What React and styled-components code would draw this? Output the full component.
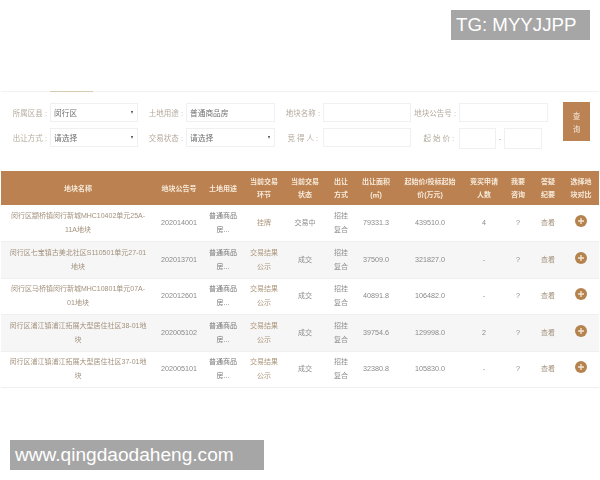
import React from 'react';
import styled, { createGlobalStyle } from 'styled-components';

const Global = createGlobalStyle`
  html, body {
    margin: 0;
    padding: 0;
    background: #fff;
  }
  body {
    width: 600px;
    height: 480px;
    overflow: hidden;
    font-family: "Liberation Sans", "Noto Sans CJK SC", sans-serif;
  }
`;

const Styled = {
  Page: styled.div`
    position: relative;
    width: 600px;
    height: 480px;
    padding-top: 91px;
    box-sizing: border-box;
    overflow: hidden;
  `,
  Content: styled.div`
    filter: blur(0.35px);
  `,
  TabLine: styled.div`
    height: 1px;
    margin: 0 1px;
    background: #f1f1f1;
    &::before {
      content: '';
      display: block;
      width: 43px;
      height: 1px;
      margin-left: 49px;
      background: #d8cbb4;
    }
  `,
  Form: styled.div`
    display: grid;
    grid-template-columns: 38px 88px 48px 89px 48px 88px 48px 89px 42px;
    grid-auto-rows: 19px;
    row-gap: 6px;
    margin: 11px 0 0 12px;
    font-size: 7.7px;
    color: #666;
  `,
  Label: styled.label`
    display: flex;
    align-items: center;
    justify-content: flex-end;
    padding-right: 3px;
    white-space: nowrap;
    color: #b5aa9d;
    font-size: 7.5px;
    letter-spacing: ${(p) => (p.$spaced ? '2px' : '0')};
  `,
  Field: styled.div`
    display: flex;
    align-items: center;
    justify-content: space-between;
    padding: 0 4px 0 3px;
    box-sizing: border-box;
    border: 1px solid #eef0f2;
    background: #fff;
    font-family: "Noto Sans CJK SC", sans-serif;
    color: #707070;
  `,
  Arrow: styled.span`
    width: 0;
    height: 0;
    border-left: 1.5px solid transparent;
    border-right: 1.5px solid transparent;
    border-top: 3px solid #444;
  `,
  Range: styled.div`
    display: grid;
    grid-template-columns: 37px 8px 38px;
    width: 83px;
  `,
  Dash: styled.span`
    color: #999;
    line-height: 21px;
    text-align: center;
  `,
  Search: styled.button`
    grid-column: 9;
    grid-row: 1 / span 2;
    margin: -1px 0 0 15px;
    width: 27px;
    height: 39px;
    padding: 0 9px;
    border: 0;
    background: #bb8353;
    color: #f3e4d6;
    font-family: "Noto Sans CJK SC", sans-serif;
    font-size: 7.5px;
    line-height: 13px;
  `,
  Table: styled.table`
    width: 598px;
    margin: 24px 0 0 1px;
    table-layout: fixed;
    border-collapse: collapse;
    font-family: "Liberation Sans", "Noto Sans CJK SC", sans-serif;
    line-height: 14px;
    text-align: center;
  `,
  HeadRow: styled.tr`
    height: 34px;
    background: #bb8151;
  `,
  Head: styled.th`
    padding: 0;
    color: #f6ead9;
    font-weight: 700;
    font-size: 7px;
    line-height: 13px;
  `,
  Row: styled.tr`
    height: 36.5px;
    border-bottom: 1px solid #efefef;
    background: ${(p) => (p.$striped ? '#f6f6f6' : '#fff')};
  `,
  Cell: styled.td`
    padding: 0 ${(p) => p.$inset || 3}px;
    color: ${(p) => p.$color || '#8e8e8e'};
    font-size: 7px;
  `,
  Number: styled.td`
    padding: 0;
    color: #8a8a8a;
    font-size: 7.2px;
  `,
  Add: styled.svg`
    display: block;
    width: 12px;
    height: 12px;
    margin: -4px auto 0;
  `,
  Badge: styled.div`
    position: absolute;
    height: 30px;
    padding-left: 5px;
    box-sizing: border-box;
    background: #a6a6a6;
    color: #fff;
    line-height: 30px;
    white-space: nowrap;
  `,
};

const TopBadge = styled(Styled.Badge)`
  top: 10px;
  left: 451px;
  width: 139px;
  font-size: 18.7px;
`;

const BottomBadge = styled(Styled.Badge)`
  top: 440px;
  left: 10px;
  width: 254px;
  font-size: 19.1px;
`;

const columns = [154, 48, 40, 42, 40, 32, 38, 70, 38, 30, 30, 36];

const headers = [
  ['地块名称'],
  ['地块公告号'],
  ['土地用途'],
  ['当前交易', '环节'],
  ['当前交易', '状态'],
  ['出让', '方式'],
  ['出让面积', '(㎡)'],
  ['起始价/投标起始', '价(万元)'],
  ['竞买申请', '人数'],
  ['我要', '咨询'],
  ['答疑', '纪要'],
  ['选择地', '块对比'],
];

const rows = [
  { name: '闵行区颛桥镇闵行新城MHC10402单元25A-11A地块', no: '202014001', step: '挂牌', state: '交易中', area: '79331.3', price: '439510.0', count: '4' },
  { name: '闵行区七宝镇古美北社区S110501单元27-01地块', no: '202013701', step: '交易结果公示', state: '成交', area: '37509.0', price: '321827.0', count: '-' },
  { name: '闵行区马桥镇闵行新城MHC10801单元07A-01地块', no: '202012601', step: '交易结果公示', state: '成交', area: '40891.8', price: '106482.0', count: '-' },
  { name: '闵行区浦江镇浦江拓展大型居住社区38-01地块', no: '202005102', step: '交易结果公示', state: '成交', area: '39754.6', price: '129998.0', count: '2' },
  { name: '闵行区浦江镇浦江拓展大型居住社区37-01地块', no: '202005101', step: '交易结果公示', state: '成交', area: '32380.8', price: '105830.0', count: '-' },
];

const AddIcon = () => (
  <Styled.Add viewBox="0 0 12 12">
    <circle cx="6" cy="6" r="6" fill="#b5834e" />
    <path d="M6 3v6M3 6h6" stroke="#f4e6d6" strokeWidth="1.3" />
  </Styled.Add>
);

const App = () => (
  <Styled.Page>
    <Global />
    <Styled.Content>
      <Styled.TabLine />
      <Styled.Form>
        <Styled.Label>所属区县 :</Styled.Label>
        <Styled.Field>闵行区<Styled.Arrow /></Styled.Field>
        <Styled.Label>土地用途 :</Styled.Label>
        <Styled.Field>普通商品房</Styled.Field>
        <Styled.Label>地块名称 :</Styled.Label>
        <Styled.Field />
        <Styled.Label>地块公告号 :</Styled.Label>
        <Styled.Field />
        <Styled.Search>查询</Styled.Search>
        <Styled.Label>出让方式 :</Styled.Label>
        <Styled.Field>请选择<Styled.Arrow /></Styled.Field>
        <Styled.Label>交易状态 :</Styled.Label>
        <Styled.Field>请选择<Styled.Arrow /></Styled.Field>
        <Styled.Label $spaced>竞得人:</Styled.Label>
        <Styled.Field />
        <Styled.Label $spaced>起始价:</Styled.Label>
        <Styled.Range>
          <Styled.Field />
          <Styled.Dash>-</Styled.Dash>
          <Styled.Field />
        </Styled.Range>
      </Styled.Form>
      <Styled.Table>
        <colgroup>
          {columns.map((width, i) => <col key={i} width={width} />)}
        </colgroup>
        <thead>
          <Styled.HeadRow>
            {headers.map((lines) => (
              <Styled.Head key={lines[0] + lines[1]}>
                {lines.map((line) => <div key={line}>{line}</div>)}
              </Styled.Head>
            ))}
          </Styled.HeadRow>
        </thead>
        <tbody>
          {rows.map((row, i) => (
            <Styled.Row key={row.no} $striped={i % 2 === 1}>
              <Styled.Cell $color="#a3917d" $inset={8}>{row.name}</Styled.Cell>
              <Styled.Number>{row.no}</Styled.Number>
              <Styled.Cell $color="#777" $inset={5}>普通商品房...</Styled.Cell>
              <Styled.Cell $color="#ab967c" $inset={7}>{row.step}</Styled.Cell>
              <Styled.Cell>{row.state}</Styled.Cell>
              <Styled.Cell $inset={8}>招挂复合</Styled.Cell>
              <Styled.Number>{row.area}</Styled.Number>
              <Styled.Number>{row.price}</Styled.Number>
              <Styled.Number>{row.count}</Styled.Number>
              <Styled.Number>?</Styled.Number>
              <Styled.Cell $color="#a3917d">查看</Styled.Cell>
              <Styled.Cell><AddIcon /></Styled.Cell>
            </Styled.Row>
          ))}
        </tbody>
      </Styled.Table>
    </Styled.Content>
    <TopBadge>TG: MYYJJPP</TopBadge>
    <BottomBadge>www.qingdaodaheng.com</BottomBadge>
  </Styled.Page>
);

export default App;
